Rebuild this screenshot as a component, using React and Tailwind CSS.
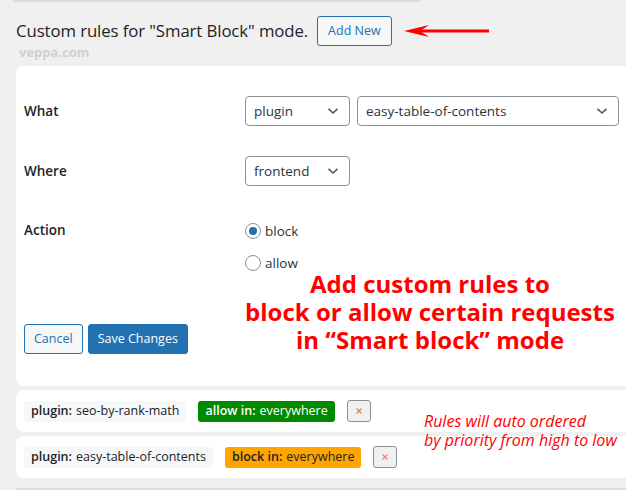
import React from "react";

const Chevron = () => (
  <svg width="12" height="8" viewBox="0 0 12 8" className="shrink-0">
    <path d="M1.5 1.8 L6 6 L10.5 1.8" fill="none" stroke="#50575e" strokeWidth="1.6" />
  </svg>
);

const Select = ({ value, className }) => (
  <div
    className={`h-[30px] flex items-center justify-between pl-[8px] pr-[10px] border border-[#8c8f94] rounded-[4px] bg-white text-[13.5px] text-[#2c3338] ${className}`}
  >
    <span>{value}</span>
    <Chevron />
  </div>
);

const Radio = ({ checked, label }) => (
  <div className="flex items-center gap-[4px] h-[20px] text-[13.5px] text-[#2c3338]">
    <span className="w-[16px] h-[16px] rounded-full border border-[#8c8f94] bg-white flex items-center justify-center">
      {checked && <span className="w-[8px] h-[8px] rounded-full bg-[#2271b1]" />}
    </span>
    <span>{label}</span>
  </div>
);

const Rule = ({ name, action, actionClass, xColor }) => (
  <div className="h-[42px] bg-white rounded-l-[8px] flex items-center pl-[8px] gap-[12px] text-[12.5px]">
    <span className="h-[21px] px-[7px] flex items-center bg-[#f6f7f7] rounded-[3px] text-[#1d2327]">
      <b className="font-semibold mr-[4px]">plugin:</b>
      {name}
    </span>
    <span className={`h-[21px] px-[7px] flex items-center rounded-[3px] ${actionClass}`}>
      <b className="font-semibold mr-[4px]">{action} in:</b>
      everywhere
    </span>
    <span className="w-[24px] h-[22px] border border-[#8c8f94] rounded-[3px] bg-[#f0f0f1] flex items-center justify-center">
      <svg width="8" height="8" viewBox="0 0 8 8">
        <path d="M1.5 1.5 L6.5 6.5 M6.5 1.5 L1.5 6.5" stroke={xColor} strokeWidth="1.2" />
      </svg>
    </span>
  </div>
);

export default function App() {
  return (
    <div
      className="w-[626px] h-[490px] overflow-hidden bg-[#f0f0f1] text-[#1d2327] relative"
      style={{ fontFamily: '"Open Sans", "Noto Sans", sans-serif' }}
    >
      <div className="ml-[13px] mr-[206px] h-[2px] bg-[#dcdcde]" />

      <div className="pl-[16px] pt-[14px] flex items-center gap-[9px]">
        <h2 className="text-[16.8px] tracking-[-0.1px] leading-[30px] text-[#1d2327]">Custom rules for "Smart Block" mode.</h2>
        <button className="h-[30px] px-[10px] border border-[#2271b1] rounded-[3px] bg-[#f6f7f7] text-[#2271b1] text-[12.5px]">
          Add New
        </button>
        <svg width="88" height="14" viewBox="0 0 88 14" className="ml-[2px]">
          <path d="M14 7 L86 7" stroke="#f00" strokeWidth="3" />
          <path d="M1 7 L26 1 L17 7 L26 13 Z" fill="#f00" />
        </svg>
      </div>
      <div className="pl-[19px] text-[13px] font-bold text-[#d0d0d0] leading-[16px] mt-[-2px]">veppa.com</div>

      <div className="ml-[16px] mr-[-20px] mt-[6px] bg-white rounded-l-[8px] pl-[8px] pt-[30px] pb-[32px] relative">
        <div className="grid grid-cols-[221px_1fr] items-center gap-y-[30px]">
          <div className="text-[13.5px] font-semibold">What</div>
          <div className="flex items-center gap-[7px]">
            <Select value="plugin" className="w-[105px]" />
            <Select value="easy-table-of-contents" className="w-[262px]" />
            <span className="text-[13px] text-[#c9a800]">!</span>
          </div>
          <div className="text-[13.5px] font-semibold">Where</div>
          <Select value="frontend" className="w-[105px]" />
        </div>

        <div className="grid grid-cols-[221px_1fr] mt-[37px]">
          <div className="text-[13.5px] font-semibold leading-[16px] mt-[-1px]">Action</div>
          <div className="flex flex-col gap-[12px] mt-[-2px]">
            <Radio checked label="block" />
            <Radio label="allow" />
          </div>
        </div>

        <div className="flex gap-[5px] mt-[51px]">
          <button className="h-[30px] px-[9px] border border-[#2271b1] rounded-[3px] bg-[#f6f7f7] text-[#2271b1] text-[12.5px]">
            Cancel
          </button>
          <button className="h-[30px] px-[9px] border border-[#2271b1] rounded-[3px] bg-[#2271b1] text-white text-[12.5px]">
            Save Changes
          </button>
        </div>

        <div className="absolute left-[214px] w-[400px] top-[204px] text-center text-[#ff0000] font-bold text-[24px] leading-[28px]">
          Add custom rules to
          <br />
          block or allow certain requests
          <br />
          in “Smart block” mode
        </div>
      </div>

      <div className="ml-[16px] mr-[-20px] mt-[4px] flex flex-col gap-[4px]">
        <Rule name="seo-by-rank-math" action="allow" actionClass="bg-[#008a00] text-white" xColor="#c98a5a" />
        <Rule name="easy-table-of-contents" action="block" actionClass="bg-[#ffa500] text-[#1d2327]" xColor="#f07f6a" />
      </div>
      <div className="ml-[16px] mt-[10px] h-[2px] bg-[#dcdcde]" />

      <div className="absolute left-[424px] top-[412px] text-[#ff0000] italic text-[16px] leading-[19px]">
        Rules will auto ordered
        <br />
        by priority from high to low
      </div>
    </div>
  );
}
